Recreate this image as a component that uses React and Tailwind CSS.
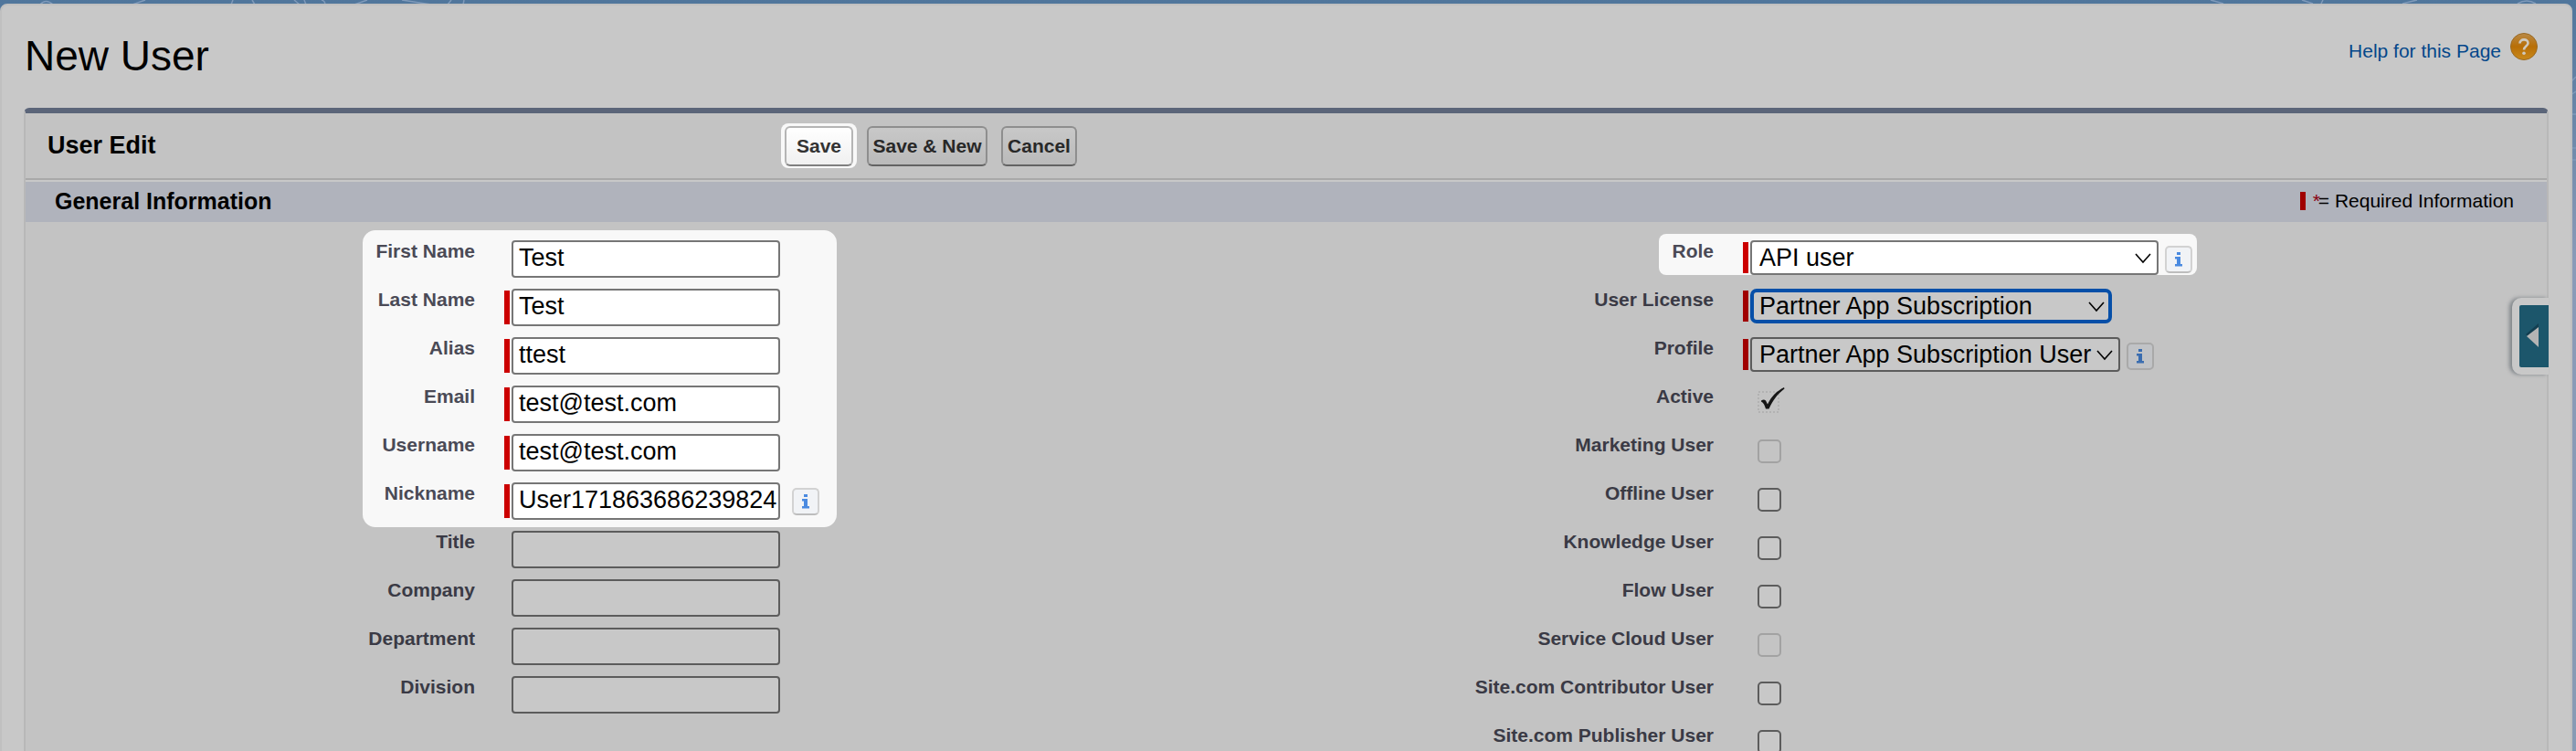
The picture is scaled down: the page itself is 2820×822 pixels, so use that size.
import React, { useState } from "react";

const textFields = [
  { id: "firstName", label: "First Name", value: "Test" },
  { id: "lastName", label: "Last Name", value: "Test", required: true },
  { id: "alias", label: "Alias", value: "ttest", required: true },
  { id: "email", label: "Email", value: "test@test.com", required: true },
  { id: "username", label: "Username", value: "test@test.com", required: true },
  { id: "nickname", label: "Nickname", value: "User171863686239824", required: true, info: true },
];

const emptyFields = [
  { id: "title", label: "Title" },
  { id: "company", label: "Company" },
  { id: "department", label: "Department" },
  { id: "division", label: "Division" },
];

const checkFields = [
  { id: "marketingUser", label: "Marketing User", disabled: true },
  { id: "offlineUser", label: "Offline User" },
  { id: "knowledgeUser", label: "Knowledge User" },
  { id: "flowUser", label: "Flow User" },
  { id: "serviceCloudUser", label: "Service Cloud User", disabled: true },
  { id: "siteContributor", label: "Site.com Contributor User" },
  { id: "sitePublisher", label: "Site.com Publisher User" },
];

const InfoButton = ({ dim }) => (
  <button
    type="button"
    aria-label="Info"
    className={
      dim
        ? "mt-[6px] flex size-[30px] shrink-0 items-center justify-center rounded-[5px] border-2 border-[#a9a9a9] bg-[#c1c3c6]"
        : "mt-[6px] flex size-[30px] shrink-0 items-center justify-center rounded-[5px] border-2 border-[#d2d2d2] border-b-[#bdbdbd] bg-[#f1f3f6]"
    }
  >
    <svg viewBox="0 0 10 16" className="h-4 w-[10px]" fill={dim ? "#3a6db0" : "#4a8ae0"}>
      <rect x="3" y="0" width="4" height="3" />
      <path d="M1 5h6v8h2v2.500H1V13h2V7.500H1z" />
    </svg>
  </button>
);

const RequiredBar = ({ show, dim, className }) => (
  <span
    className={`mt-[2px] mr-[2px] w-[6px] shrink-0 ${className} ${show ? (dim ? "bg-[#a00000]" : "bg-[#cc0000]") : ""}`}
  />
);

const FieldLabel = ({ id, dim, className, children }) => (
  <label
    htmlFor={id}
    className={`shrink-0 text-right text-[21px] leading-6 font-bold whitespace-nowrap ${className} ${dim ? "text-[#3a3a45]" : "text-[#4a4a56]"}`}
  >
    {children}
  </label>
);

const TextRow = ({ field, dim }) => {
  const [value, setValue] = useState(field.value || "");

  return (
    <div className="flex h-[53px] items-start">
      <FieldLabel id={field.id} dim={dim} className="w-[123px]">
        {field.label}
      </FieldLabel>
      <div className="ml-8 flex">
        <RequiredBar show={field.required} className="h-[37px]" />
        <input
          id={field.id}
          type="text"
          value={value}
          onChange={(e) => setValue(e.target.value)}
          className={`h-[41px] w-[294px] rounded-[4px] border-2 pb-[3px] pl-[6px] text-[27px] leading-8 text-black outline-none ${dim ? "border-[#5c5c5c] bg-[#c8c8c8]" : "border-[#767676] bg-white"}`}
        />
      </div>
      {field.info && (
        <div className="ml-[13px]">
          <InfoButton />
        </div>
      )}
    </div>
  );
};

const SelectBox = ({ id, options, className }) => (
  <div className="relative">
    <select
      id={id}
      className={`h-[38px] appearance-none text-[27px] leading-7 text-black outline-none ${className}`}
    >
      {options.map((option) => (
        <option key={option}>{option}</option>
      ))}
    </select>
    <svg
      viewBox="0 0 18 12"
      className="pointer-events-none absolute top-[14px] right-2 h-3 w-[18px]"
      fill="none"
      stroke="#000"
      strokeWidth="1.600"
    >
      <path d="M1 1l8 9 8-9" />
    </svg>
  </div>
);

const HelpIcon = () => (
  <svg viewBox="0 0 30 30" className="size-[30px]">
    <defs>
      <linearGradient id="helpFill" x1="0" y1="0" x2="0" y2="1">
        <stop offset="0" stopColor="#b98a48" />
        <stop offset="0.5" stopColor="#b86e06" />
        <stop offset="1" stopColor="#c98a1c" />
      </linearGradient>
    </defs>
    <circle cx="15" cy="15" r="14.500" fill="url(#helpFill)" stroke="#9a6a24" strokeWidth="1" />
    <path d="M10.500 11.500c0-5.500 9-5.500 9-.3 0 3.300-4.500 3.500-4.500 7.300" fill="none" stroke="#cfcac0" strokeWidth="2.600" />
    <circle cx="15" cy="22.300" r="1.800" fill="#cfcac0" />
  </svg>
);

const BackgroundLines = () => (
  <svg
    className="absolute inset-0 h-full w-full"
    fill="none"
    stroke="#7f9aba"
    strokeWidth="1.500"
    aria-hidden="true"
  >
    <path d="M44 5q6-7 14 0M145 5l14-5M253 5l2-5M276 0l3 5M322 0l6 5M333 0l2 5M356 5q0-4-4-5M388 5l14-5M440 0l32 5M490 5l4-5M507 5l1-5" />
    <path d="M2420 0l14 4M2520 0l12 4M2541 4l2-4M2630 4l16-4M2756 4q10-6 20 0" />
    <path d="M2814 90l6-6M2814 104l6-4M2814 125h6M2814 162h6M2814 175h6" />
  </svg>
);

const App = () => {
  return (
    <div className="relative h-screen overflow-hidden bg-linear-to-b from-[#50769c] via-[#8a9bb8] via-35% to-[#879bb4] pt-1 pr-1 font-['Liberation_Sans',Arial,sans-serif]">
      <BackgroundLines />
      <div className="relative min-h-screen rounded-t-[8px] border-2 border-[#c0c0c0] bg-[#c8c8c8] px-6">
        <header className="flex h-28 items-start justify-between">
          <h1 className="pt-[29px] pl-px text-[46px] leading-[52px] text-black">New User</h1>
          <a href="#help" className="flex items-start gap-[10px] pt-[30px] pr-3 text-[21px] text-[#04478a]">
            <span className="pt-2 leading-6">Help for this Page</span>
            <HelpIcon />
          </a>
        </header>

        <main className="min-h-screen rounded-t-[6px] border-x-2 border-t-[6px] border-x-[#b8b8b8] border-t-[#5b6579] bg-[#c3c3c3]">
          <div className="flex h-[73px] items-start border-b-2 border-[#a9a9a9]">
            <h2 className="w-[827px] shrink-0 pt-[19px] pl-6 text-[27px] leading-8 font-bold text-black">User Edit</h2>
            <div className="mt-[11px] flex items-start">
              <div className="rounded-[8px] bg-[#f8f8f8] px-1 pt-[3px] pb-[2px]">
                <button className="h-11 w-[75px] rounded-[6px] border-2 border-[#b5b5b5] border-b-[#7f7f7f] bg-linear-to-b from-white to-[#f0f0f0] text-[21px] leading-6 font-bold text-[#333]">
                  Save
                </button>
              </div>
              <button className="mt-[3px] ml-[11px] h-11 w-[132px] rounded-[6px] border-2 border-[#8e8e8e] border-b-[#636363] bg-linear-to-b from-[#c8c8c8] to-[#bababa] text-[21px] leading-6 font-bold whitespace-nowrap text-[#282828]">
                Save &amp; New
              </button>
              <button className="mt-[3px] ml-[15px] h-11 w-[83px] rounded-[6px] border-2 border-[#8e8e8e] border-b-[#636363] bg-linear-to-b from-[#c8c8c8] to-[#bababa] text-[21px] leading-6 font-bold text-[#282828]">
                Cancel
              </button>
            </div>
          </div>

          <div className="flex h-[46px] items-center justify-between border-t-2 border-[#c8c8c8] bg-[#b0b3bc] pr-9 pb-[3px] pl-8">
            <h3 className="text-[25px] leading-7 font-bold text-black">General Information</h3>
            <div className="flex items-center text-[21px] leading-6 text-black">
              <span className="mr-2 h-5 w-[6px] bg-[#a00000]" />
              <span className="w-[6px] text-[#8a0010]">*</span>
              <span>= Required Information</span>
            </div>
          </div>

          <div className="grid grid-cols-2">
            <section className="pt-[9px]">
              <div className="ml-[369px] h-[325px] w-[519px] rounded-[14px] bg-[#f8f8f8] pt-[11px]">
                {textFields.map((field) => (
                  <TextRow key={field.id} field={field} />
                ))}
              </div>
              <div className="mt-1 ml-[369px]">
                {emptyFields.map((field) => (
                  <TextRow key={field.id} field={field} dim />
                ))}
              </div>
            </section>

            <section className="pt-[13px] pl-[172px]">
              <div className="ml-[236px] flex h-[45px] w-[589px] items-start rounded-[8px] bg-[#f8f8f8] pt-[7px]">
                <FieldLabel id="role" className="w-[60px]">Role</FieldLabel>
                <div className="ml-8 flex">
                  <RequiredBar show className="h-[34px]" />
                  <SelectBox id="role" options={["API user"]} className="w-[447px] rounded-[4px] border-2 border-[#767676] bg-white pl-2" />
                </div>
                <div className="ml-[7px]">
                  <InfoButton />
                </div>
              </div>

              <div className="mt-[15px] flex h-[53px] items-start">
                <FieldLabel id="license" dim className="w-[296px]">User License</FieldLabel>
                <div className="ml-8 flex">
                  <RequiredBar show dim className="h-[34px]" />
                  <SelectBox id="license" options={["Partner App Subscription"]} className="w-[396px] rounded-[7px] border-4 border-[#064fa8] bg-[#c8c8c8] pl-[6px]" />
                </div>
              </div>
              <div className="flex h-[53px] items-start">
                <FieldLabel id="profile" dim className="w-[296px]">Profile</FieldLabel>
                <div className="ml-8 flex">
                  <RequiredBar show dim className="h-[34px]" />
                  <SelectBox id="profile" options={["Partner App Subscription User"]} className="w-[405px] rounded-[4px] border-2 border-[#5c5c5c] bg-[#c8c8c8] pl-2" />
                </div>
                <div className="ml-[7px]">
                  <InfoButton dim />
                </div>
              </div>
              <div className="flex h-[53px] items-start">
                <span className="w-[296px] shrink-0 text-right text-[21px] leading-6 font-bold text-[#3a3a45]">Active</span>
                <svg viewBox="0 0 30 30" className="mt-[2px] ml-12 size-[30px]" role="img" aria-label="Checked">
                  <rect x="1" y="5" width="22" height="22" fill="none" stroke="#adadad" strokeWidth="1.500" strokeDasharray="2 2" />
                  <path d="M4 14.500q3-2 5 0l2 4C15 10 21 4 29 0l.5 1.500C22 7 17 14 12.500 23.500H9C8 20 6.500 16.500 4 15.500z" fill="#161616" />
                </svg>
              </div>
              {checkFields.map((field) => (
                <div key={field.id} className="flex h-[53px] items-start">
                  <FieldLabel id={field.id} dim className="w-[296px]">{field.label}</FieldLabel>
                  <input
                    id={field.id}
                    type="checkbox"
                    disabled={field.disabled}
                    className={`mt-[6px] ml-12 size-[26px] shrink-0 appearance-none rounded-[5px] border-2 ${field.disabled ? "border-[#a2a2a2] bg-[#c4c4c4]" : "border-[#5c5c5c] bg-[#c8c8c8] checked:bg-[#064fa8]"}`}
                  />
                </div>
              ))}
            </section>
          </div>
        </main>

        {/* collapsed side panel handle, sits over the right edge of the form */}
        <button
          type="button"
          aria-label="Open side panel"
          className="absolute top-[320px] right-6 flex h-[84px] w-10 rounded-l-[10px] bg-[#c8c8c8] py-2 pl-2 shadow-[-3px_0_4px_#80868a]"
        >
          <span className="flex h-full w-full items-center rounded-l-[2px] bg-[#1c566b] pl-[6px]">
            <svg viewBox="0 0 16 28" className="h-7 w-4">
              <path d="M15 0v24L1 12z" fill="#123e50" />
              <path d="M15 4v22L2 14z" fill="#b4b4b4" />
            </svg>
          </span>
        </button>
      </div>
    </div>
  );
};

export default App;
